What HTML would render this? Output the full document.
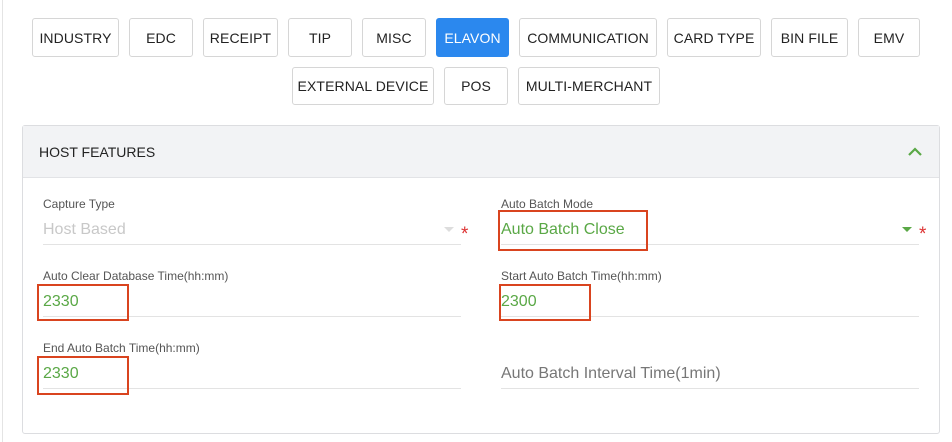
<!DOCTYPE html>
<html><head><style>
*{box-sizing:border-box;margin:0;padding:0}
body{width:952px;height:442px;background:#fff;font-family:"Liberation Sans",sans-serif;position:relative;overflow:hidden}
.edge{position:absolute;left:2px;top:0;width:1px;height:442px;background:#e4e4e4}
.b{position:absolute;height:39px;border:1px solid #d6d6d6;border-radius:3px;background:#fff;color:#222;font-size:14px;display:flex;align-items:center;justify-content:center;letter-spacing:.1px}
.b.on{background:#2b88ee;border-color:#2b88ee;color:#fff}
.panel{position:absolute;left:22px;top:125px;width:918px;height:309px;border:1px solid #dcdde0;border-radius:3px}
.hd{position:absolute;left:0;top:0;width:100%;height:52px;background:#f2f3f5;border-bottom:1px solid #e2e3e6}
.hd span{position:absolute;left:16px;top:18px;font-size:14px;color:#222}
.lab{position:absolute;font-size:12px;color:#555}
.val{position:absolute;font-size:16px;color:#5aa846}
.ln{position:absolute;height:1px;background:#e3e3e3}
.rb{position:absolute;border:2px solid #d9441f}
.star{position:absolute;color:#d33;font-size:19px}
.arr{position:absolute;width:0;height:0;border-left:5px solid transparent;border-right:5px solid transparent}
</style></head><body>
<div class="edge"></div>
<div class="b" style="left:32px;top:18px;width:87px">INDUSTRY</div>
<div class="b" style="left:129px;top:18px;width:64px">EDC</div>
<div class="b" style="left:203px;top:18px;width:75px">RECEIPT</div>
<div class="b" style="left:288px;top:18px;width:64px">TIP</div>
<div class="b" style="left:362px;top:18px;width:64px">MISC</div>
<div class="b on" style="left:436px;top:18px;width:73px">ELAVON</div>
<div class="b" style="left:519px;top:18px;width:138px">COMMUNICATION</div>
<div class="b" style="left:667px;top:18px;width:94px">CARD TYPE</div>
<div class="b" style="left:771px;top:18px;width:77px">BIN FILE</div>
<div class="b" style="left:858px;top:18px;width:62px">EMV</div>
<div class="b" style="left:292px;top:67px;width:142px;height:38px">EXTERNAL DEVICE</div>
<div class="b" style="left:444px;top:67px;width:64px;height:38px">POS</div>
<div class="b" style="left:518px;top:67px;width:142px;height:38px">MULTI-MERCHANT</div>

<div class="panel"><div class="hd"><span>HOST FEATURES</span>
<svg style="position:absolute;left:884px;top:20px" width="16" height="12" viewBox="0 0 16 12"><path d="M2 9 L8 3 L14 9" fill="none" stroke="#5aa846" stroke-width="2.2"/></svg>
</div></div>

<div class="lab" style="left:43px;top:197px">Capture Type</div>
<div class="val" style="left:43px;top:221px;color:#c8c8c8">Host Based</div>
<div class="arr" style="left:444px;top:227px;border-top:5px solid #ddd"></div>
<div class="star" style="left:461px;top:224px">*</div>
<div class="ln" style="left:43px;top:244px;width:418px"></div>

<div class="lab" style="left:501px;top:197px">Auto Batch Mode</div>
<div class="val" style="left:501px;top:221px">Auto Batch Close</div>
<div class="arr" style="left:902px;top:227px;border-top:5px solid #5aa846"></div>
<div class="star" style="left:919px;top:224px">*</div>
<div class="ln" style="left:501px;top:244px;width:418px"></div>
<div class="rb" style="left:498px;top:210px;width:150px;height:41px"></div>

<div class="lab" style="left:43px;top:269px">Auto Clear Database Time(hh:mm)</div>
<div class="val" style="left:43px;top:293px">2330</div>
<div class="ln" style="left:43px;top:316px;width:418px"></div>
<div class="rb" style="left:37px;top:284px;width:92px;height:37px"></div>

<div class="lab" style="left:501px;top:269px">Start Auto Batch Time(hh:mm)</div>
<div class="val" style="left:501px;top:293px">2300</div>
<div class="ln" style="left:501px;top:316px;width:418px"></div>
<div class="rb" style="left:499px;top:284px;width:92px;height:37px"></div>

<div class="lab" style="left:43px;top:341px">End Auto Batch Time(hh:mm)</div>
<div class="val" style="left:43px;top:365px">2330</div>
<div class="ln" style="left:43px;top:388px;width:418px"></div>
<div class="rb" style="left:37px;top:356px;width:92px;height:39px"></div>

<div class="val" style="left:501px;top:365px;color:#777">Auto Batch Interval Time(1min)</div>
<div class="ln" style="left:501px;top:388px;width:418px"></div>
</body></html>
